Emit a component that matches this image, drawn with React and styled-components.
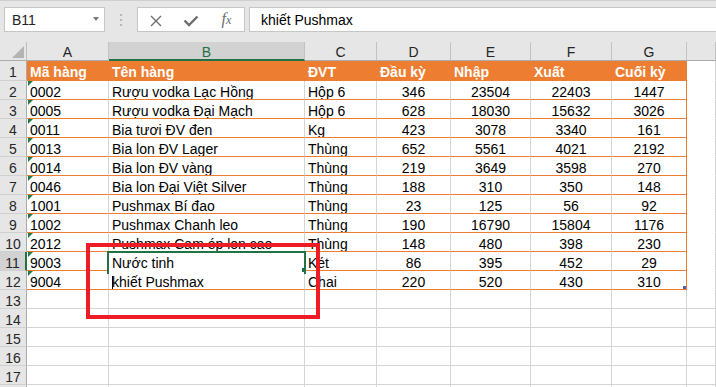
import React from 'react';
import styled, { createGlobalStyle, css } from 'styled-components';

const GREEN = '#217346';
const ORANGE = '#ed7d31';
const GRID = '#d4d4d4';

const GlobalStyle = createGlobalStyle`
  html, body {
    margin: 0;
    padding: 0;
    background: #fff;
  }
  body {
    font-family: "Liberation Sans", Arial, sans-serif;
  }
  #root {
    position: relative;
    width: 716px;
    height: 387px;
    overflow: hidden;
  }
`

const FormulaBar = styled.div`
  display: flex;
  align-items: flex-start;
  box-sizing: border-box;
  height: 42px;
  padding: 6px 0 0 4px;
  border-top: 1px solid #cfcfcf;
  background: #e6e6e6;
`

const NameBox = styled.div`
  position: relative;
  display: flex;
  align-items: center;
  box-sizing: border-box;
  width: 101px;
  height: 25px;
  padding-left: 7px;
  border: 1px solid #c6c6c6;
  background: #fff;
  font-size: 14px;
  color: #222;

  &::after {
    content: '';
    position: absolute;
    right: 5px;
    top: 9px;
    border-left: 3.5px solid transparent;
    border-right: 3.5px solid transparent;
    border-top: 4px solid #7a7a7a;
  }
`

const Grip = styled.svg`
  margin: 6px 14px 0;
`

const ButtonGroup = styled.div`
  display: flex;
  box-sizing: border-box;
  width: 108px;
  height: 25px;
  border: 1px solid #c6c6c6;
  background: #fff;
`

const BarButton = styled.div`
  display: flex;
  align-items: center;
  justify-content: center;
  flex: 1;
  padding-top: 2px;
`

const Fx = styled.span`
  font-family: "Liberation Serif", "Times New Roman", serif;
  font-style: italic;
  font-size: 16px;
  color: #6d6d6d;
  margin-top: -3px;

  small {
    font-size: 12px;
  }
`

const FormulaInput = styled.div`
  display: flex;
  align-items: center;
  box-sizing: border-box;
  flex: 1;
  height: 25px;
  margin: 0 -2px 0 4px;
  padding-left: 11px;
  border: 1px solid #c6c6c6;
  background: #fff;
  font-size: 14px;
  color: #000;
`

const Sheet = styled.div`
  display: grid;
  grid-template-columns: 27px 82px 196px 72px 74px 80px 81px 75px 1fr;
  grid-template-rows: 19px 20px repeat(17, 19px);
`

const Corner = styled.div`
  position: relative;
  box-sizing: border-box;
  background: #e6e6e6;
  border-right: 1px solid #bdbdbd;
  border-bottom: 1px solid #ababab;

  &::after {
    content: '';
    position: absolute;
    right: 2px;
    bottom: 2px;
    border-left: 12px solid transparent;
    border-bottom: 12px solid #b4b4b4;
  }
`

const ColHead = styled.div`
  box-sizing: border-box;
  padding-top: 2px;
  text-align: center;
  font-size: 14px;
  line-height: 16px;
  color: #262626;
  background: #e6e6e6;
  border-right: 1px solid #c2c2c2;
  border-bottom: 1px solid #ababab;
  overflow: hidden;

  ${p => p.$selected && css`
    background: #d2d2d2;
    color: ${GREEN};
    border-bottom: 2px solid ${GREEN};
  `}
`

const RowHead = styled.div`
  box-sizing: border-box;
  padding-top: 3px;
  text-align: center;
  font-size: 14px;
  line-height: 16px;
  color: #262626;
  background: #e6e6e6;
  border-right: 1px solid #ababab;
  border-bottom: 1px solid #d0d0d0;

  ${p => p.$selected && css`
    background: #d2d2d2;
    border-right: 2px solid ${GREEN};
  `}
`

const Cell = styled.div`
  position: relative;
  box-sizing: border-box;
  padding: 3px 3px 0;
  font-size: 14px;
  line-height: 16px;
  white-space: nowrap;
  overflow: hidden;
  color: #000;
  background: #fff;
  text-align: ${p => p.$align || 'left'};
  border-right: 1px solid ${p => (p.$edge ? ORANGE : GRID)};
  border-bottom: 1px solid ${p => p.$line || GRID};

  ${p => p.$head && css`
    background: ${ORANGE};
    color: #fff;
    font-weight: bold;
    border-right-color: ${ORANGE};
    border-bottom-color: ${ORANGE};
  `}

  ${p => p.$flag && css`
    &::before {
      content: '';
      position: absolute;
      left: 1px;
      top: 0;
      border-top: 5px solid #1f7a45;
      border-right: 5px solid transparent;
    }
  `}

  ${p => p.$resize && css`
    &::after {
      content: '';
      position: absolute;
      right: 0;
      bottom: 0;
      width: 3px;
      height: 3px;
      background: #4e62c6;
    }
  `}
`

const ActiveCell = styled(Cell)`
  overflow: visible;
  z-index: 2;
  border-bottom-color: #fff;

  &::before {
    content: '';
    position: absolute;
    left: -2px;
    right: -2px;
    top: -1px;
    height: 21px;
    border: 2px solid ${GREEN};
    border-bottom: none;
  }

  &::after {
    content: '';
    position: absolute;
    right: -2px;
    bottom: -2px;
    width: 4px;
    height: 4px;
    background: ${GREEN};
  }
`

const Caret = styled.span`
  display: inline-block;
  width: 1px;
  height: 14px;
  margin-right: -1px;
  vertical-align: -3px;
  background: #000;
`

const Callout = styled.div`
  position: absolute;
  left: 86px;
  top: 243px;
  width: 234px;
  height: 76px;
  box-sizing: border-box;
  border: 4px solid #ee1c25;
  z-index: 5;
  pointer-events: none;
`

const columns = ['A', 'B', 'C', 'D', 'E', 'F', 'G', ''];

const header = ['Mã hàng', 'Tên hàng', 'ĐVT', 'Đầu kỳ', 'Nhập', 'Xuất', 'Cuối kỳ'];

const rows = [
  ['0002', 'Rượu vodka Lạc Hồng', 'Hộp 6', 346, 23504, 22403, 1447],
  ['0005', 'Rượu vodka Đại Mạch', 'Hộp 6', 628, 18030, 15632, 3026],
  ['0011', 'Bia tươi ĐV đen', 'Kg', 423, 3078, 3340, 161],
  ['0013', 'Bia lon ĐV Lager', 'Thùng', 652, 5561, 4021, 2192],
  ['0014', 'Bia lon ĐV vàng', 'Thùng', 219, 3649, 3598, 270],
  ['0046', 'Bia lon Đại Việt Silver', 'Thùng', 188, 310, 350, 148],
  ['1001', 'Pushmax Bí đao', 'Thùng', 23, 125, 56, 92],
  ['1002', 'Pushmax Chanh leo', 'Thùng', 190, 16790, 15804, 1176],
  ['2012', 'Pushmax Cam ép lon cao', 'Thùng', 148, 480, 398, 230],
  ['9003', 'Nước tinh', 'Két', 86, 395, 452, 29],
  ['9004', 'khiết Pushmax', 'Chai', 220, 520, 430, 310],
];

function DataRow({ num, values }) {
  const last = num === 12;
  return (
    <>
      <RowHead $selected={num === 11}>{num}</RowHead>
      {values.map((v, i) => {
        const key = `${num}-${i}`;
        const props = {
          $line: ORANGE,
          $edge: i === 6,
          $align: i >= 3 ? 'center' : 'left',
          $flag: i === 0,
          $resize: last && i === 6,
        };
        if (num === 11 && i === 1) {
          return <ActiveCell key={key} {...props}>{v}</ActiveCell>;
        }
        if (num === 12 && i === 1) {
          return <Cell key={key} {...props}><Caret />{v}</Cell>;
        }
        return <Cell key={key} {...props}>{v}</Cell>;
      })}
      <Cell $line="#fff" />
    </>
  );
}

// the 18th row only peeks in at the bottom edge, so its number stays hidden
function EmptyRow({ num }) {
  return (
    <>
      <RowHead>{num <= 17 ? num : ''}</RowHead>
      {columns.map((c, i) => <Cell key={i} />)}
    </>
  );
}

export default function App() {
  return (
    <>
      <GlobalStyle />
      <FormulaBar>
        <NameBox>B11</NameBox>
        <Grip width="4" height="14" viewBox="0 0 4 14">
          <circle cx="2" cy="2" r="1.1" fill="#acacac" />
          <circle cx="2" cy="7" r="1.1" fill="#acacac" />
          <circle cx="2" cy="12" r="1.1" fill="#acacac" />
        </Grip>
        <ButtonGroup>
          <BarButton>
            <svg width="12" height="12" viewBox="0 0 12 12">
              <path d="M1 1L11 11M11 1L1 11" stroke="#6d6d6d" strokeWidth="1.4" />
            </svg>
          </BarButton>
          <BarButton>
            <svg width="16" height="12" viewBox="0 0 16 12">
              <path d="M1.5 5.5L6 10L14.5 1.5" stroke="#6d6d6d" strokeWidth="2.4" fill="none" />
            </svg>
          </BarButton>
          <BarButton>
            <Fx>f<small>x</small></Fx>
          </BarButton>
        </ButtonGroup>
        <FormulaInput>khiết Pushmax</FormulaInput>
      </FormulaBar>

      <Sheet>
        <Corner />
        {columns.map((c, i) => (
          <ColHead key={i} $selected={c === 'B'}>{c}</ColHead>
        ))}

        <RowHead>1</RowHead>
        {header.map((h, i) => (
          <Cell key={i} $head $edge={i === 6}>{h}</Cell>
        ))}
        <Cell $line="#fff" />

        {rows.map((r, i) => (
          <DataRow key={i} num={i + 2} values={r} />
        ))}

        {[13, 14, 15, 16, 17, 18].map(n => (
          <EmptyRow key={n} num={n} />
        ))}
      </Sheet>

      <Callout />
    </>
  );
}
